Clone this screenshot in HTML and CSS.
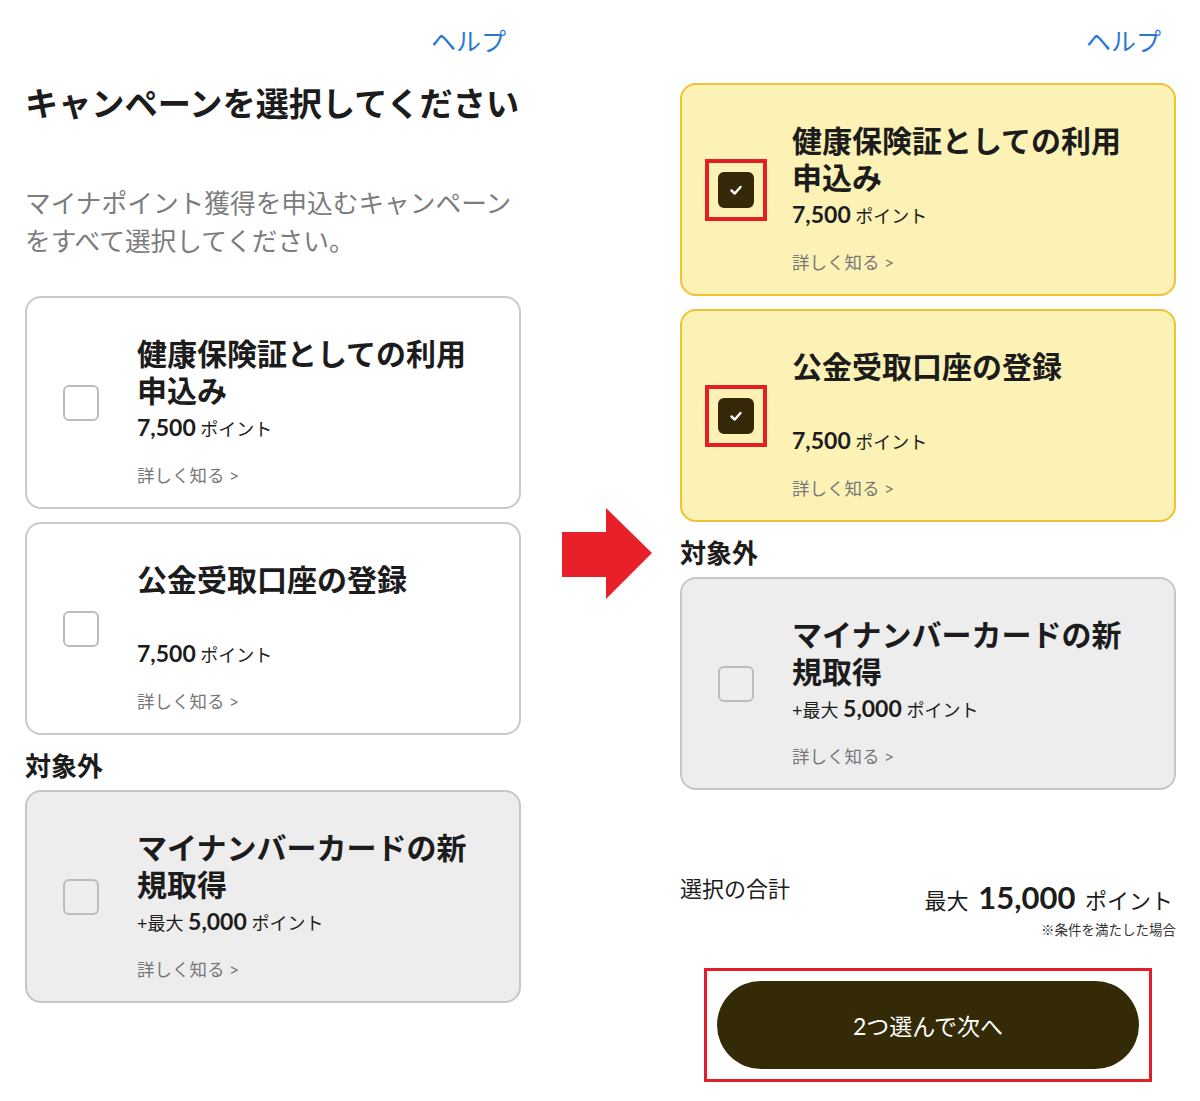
FILE: index.html
```html
<!DOCTYPE html>
<html>
<head>
  <title>キャンペーンを選択</title>
  <link rel="stylesheet" href="styles.css">
</head>
<body>
  <div class="page">
    <section class="panel">
      <div class="help-row"><a class="help">ヘルプ</a></div>
      <h1 class="page-title">キャンペーンを選択してください</h1>
      <p class="lead">マイナポイント獲得を申込むキャンペーンをすべて選択してください。</p>
      <div class="card-list">
        <div class="card">
          <div class="check-slot"><span class="check"></span></div>
          <div class="card-body">
            <h3 class="card-title">健康保険証としての利用申込み</h3>
            <p class="points"><b>7,500</b> ポイント</p>
            <a class="more">詳しく知る &gt;</a>
          </div>
        </div>
        <div class="card">
          <div class="check-slot"><span class="check"></span></div>
          <div class="card-body">
            <h3 class="card-title">公金受取口座の登録</h3>
            <p class="points"><b>7,500</b> ポイント</p>
            <a class="more">詳しく知る &gt;</a>
          </div>
        </div>
      </div>
      <h2 class="group-label">対象外</h2>
      <div class="card card-off">
        <div class="check-slot"><span class="check"></span></div>
        <div class="card-body">
          <h3 class="card-title">マイナンバーカードの新規取得</h3>
          <p class="points">+最大 <b>5,000</b> ポイント</p>
          <a class="more">詳しく知る &gt;</a>
        </div>
      </div>
    </section>

    <div class="arrow-col">
      <svg width="90" height="92" viewBox="0 0 90 92">
        <polygon points="0,24 44,24 44,0 90,45 44,91 44,69 0,69" fill="#e8202a"/>
      </svg>
    </div>

    <section class="panel">
      <div class="help-row"><a class="help">ヘルプ</a></div>
      <div class="card-list card-list-top">
        <div class="card card-on">
          <div class="check-slot">
            <span class="mark"><span class="check checked"><svg width="16" height="16" viewBox="0 0 16 16"><polyline points="3.5,8.5 6.8,11.5 12.5,5" fill="none" stroke="#fff" stroke-width="2.4" stroke-linecap="round" stroke-linejoin="round"/></svg></span></span>
          </div>
          <div class="card-body">
            <h3 class="card-title">健康保険証としての利用申込み</h3>
            <p class="points"><b>7,500</b> ポイント</p>
            <a class="more">詳しく知る &gt;</a>
          </div>
        </div>
        <div class="card card-on">
          <div class="check-slot">
            <span class="mark"><span class="check checked"><svg width="16" height="16" viewBox="0 0 16 16"><polyline points="3.5,8.5 6.8,11.5 12.5,5" fill="none" stroke="#fff" stroke-width="2.4" stroke-linecap="round" stroke-linejoin="round"/></svg></span></span>
          </div>
          <div class="card-body">
            <h3 class="card-title">公金受取口座の登録</h3>
            <p class="points"><b>7,500</b> ポイント</p>
            <a class="more">詳しく知る &gt;</a>
          </div>
        </div>
      </div>
      <h2 class="group-label">対象外</h2>
      <div class="card card-off">
        <div class="check-slot"><span class="check"></span></div>
        <div class="card-body">
          <h3 class="card-title">マイナンバーカードの新規取得</h3>
          <p class="points">+最大 <b>5,000</b> ポイント</p>
          <a class="more">詳しく知る &gt;</a>
        </div>
      </div>

      <div class="total-row">
        <span class="total-label">選択の合計</span>
        <span class="total-value">最大 <b>15,000</b> ポイント</span>
      </div>
      <p class="total-note">※条件を満たした場合</p>

      <div class="next-frame">
        <button class="next-btn">2つ選んで次へ</button>
      </div>
    </section>
  </div>
</body>
</html>
```

FILE: styles.css
```css
body {
  margin: 0;
  background-color: #fff;
  color: #1c1c1c;
  font-family: Lato, "Noto Sans CJK JP", sans-serif;
}
.page {
  display: flex;
  padding-left: 25px;
}
.panel {
  width: 496px;
  display: flex;
  flex-direction: column;
}
.help-row {
  display: flex;
  justify-content: flex-end;
  padding: 25px 15px 0 0;
  font-size: 25px;
  line-height: 32px;
}
.help {
  color: #2a78d6;
}
.page-title {
  margin: 24px 0 0;
  font-size: 33.2px;
  line-height: 44px;
  font-weight: 700;
  white-space: nowrap;
}
.lead {
  margin: 59px 0 36px;
  font-size: 25.7px;
  line-height: 38px;
  color: #7c7c7c;
}
.card-list {
  display: flex;
  flex-direction: column;
  gap: 13px;
}
.card-list-top {
  margin-top: 26px;
}
.card {
  display: flex;
  align-items: flex-start;
  padding: 37px 30px 19px 36px;
  border: 2px solid #c9c9c9;
  border-radius: 16px;
  background-color: #fff;
}
.card-on {
  background-color: #fdf2b6;
  border-color: #f0c132;
}
.card-off {
  background-color: #ededed;
  border-color: #c6c6c6;
}
.check-slot {
  flex-shrink: 0;
  margin: 50px 38px 0 0;
}
.check {
  display: flex;
  align-items: center;
  justify-content: center;
  width: 36px;
  height: 36px;
  box-sizing: border-box;
  border: 2px solid #bcbcbc;
  border-radius: 6px;
}
.checked {
  background-color: #35290a;
  border-color: #35290a;
}
.mark {
  display: block;
  margin: -13px;
  padding: 9px;
  border: 4px solid #e41e26;
}
.card-body {
  flex: 1;
}
.card-title {
  margin: 0;
  min-height: 74px;
  font-size: 30px;
  line-height: 37px;
  font-weight: 700;
}
.points {
  margin: 0;
  height: 36px;
  font-size: 18px;
  line-height: 36px;
}
.points b {
  font-size: 23px;
  font-weight: 700;
}
.more {
  display: block;
  margin-top: 19px;
  height: 24px;
  font-size: 17.5px;
  line-height: 24px;
  color: #777;
}
.group-label {
  margin: 15px 0 8px;
  font-size: 26px;
  line-height: 32px;
  font-weight: 700;
}
.arrow-col {
  width: 159px;
  flex-shrink: 0;
}
.arrow-col svg {
  display: block;
  margin: 508px 0 0 41px;
}
.total-row {
  display: flex;
  justify-content: space-between;
  align-items: flex-start;
  margin-top: 84px;
}
.total-label {
  font-size: 22px;
  line-height: 30px;
}
.total-value {
  margin-top: 3px;
  padding-right: 3px;
  font-size: 22px;
  line-height: 40px;
}
.total-value b {
  margin: 0 4px;
  font-size: 31px;
  font-weight: 700;
}
.total-note {
  margin: 0;
  text-align: right;
  font-size: 13.5px;
  line-height: 18px;
  color: #333;
}
.next-frame {
  align-self: center;
  margin-top: 29px;
  padding: 10px;
  border: 3px solid #e41e26;
}
.next-btn {
  display: block;
  width: 422px;
  height: 88px;
  border: none;
  border-radius: 44px;
  background-color: #352a06;
  color: #fff;
  font-family: Lato, "Noto Sans CJK JP", sans-serif;
  font-size: 23px;
}
```
